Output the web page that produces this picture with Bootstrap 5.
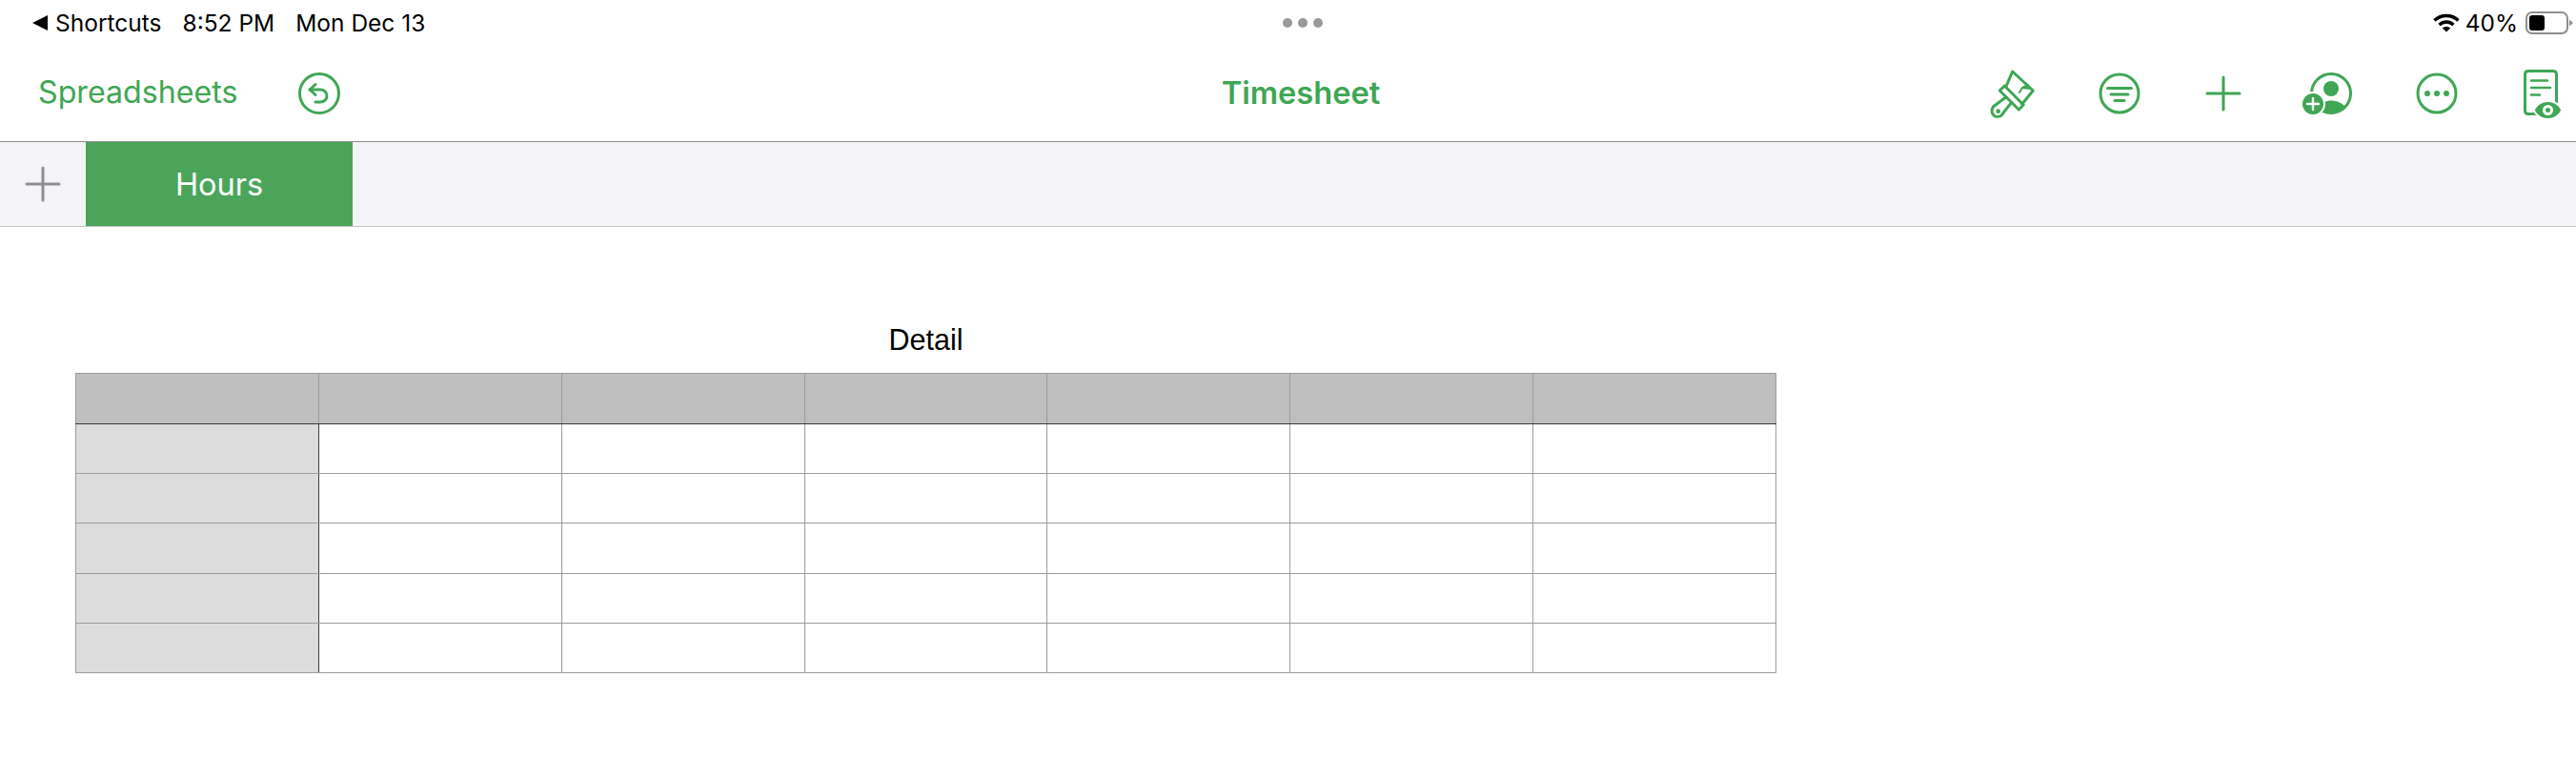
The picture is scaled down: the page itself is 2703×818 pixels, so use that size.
<!DOCTYPE html>
<html lang="en">
<head>
<meta charset="utf-8">
<title>Timesheet</title>
<link href="https://cdn.jsdelivr.net/npm/bootstrap@5.3.0/dist/css/bootstrap.min.css" rel="stylesheet">
<style>
html,body{height:100%;background:#fff;overflow:hidden}
body{font-family:Inter,"Liberation Sans",sans-serif;color:#000}
.stat-bar{height:48px;padding:0 3px 0 34px;display:grid;grid-template-columns:1fr auto 1fr;align-items:center;font-size:24.500px;line-height:1}
.stat-left{gap:22px}
.stat-dots{gap:6px}
.stat-dots i{display:block;width:10px;height:10px;border-radius:50%;background:#999}
.stat-pct{margin-left:6px}
.tool-bar{height:101px;padding:0 13px 1px 40px;display:grid;grid-template-columns:1fr auto 1fr;align-items:center;border-bottom:1px solid #8f8f8f;color:#3fa654}
.tool-link{font-size:32.200px;line-height:1}
.tool-title{font-size:32.600px;font-weight:600;line-height:1}
.undo-ic{margin-left:63px}
.ic{display:block;flex:none}
.ic-b{margin-left:52px}.ic-c{margin-left:49px}.ic-d{margin-left:51px}.ic-e{margin-left:53px}.ic-f{margin-left:57px}
.tab-bar{height:89px;background:#f5f5f7;border-bottom:1px solid #c4c4c4}
.tab-add{width:90px}
.tab-on{width:280px;background:#4aa55b;color:#fff;font-size:32.500px;height:88px;padding-top:2px}
.sheet-wrap{margin-left:79px;padding-top:100px;width:1785px}
.sheet-title{font-family:"Liberation Sans",Arial,sans-serif;font-size:30.500px;line-height:36px;margin-bottom:17px;text-align:center}
.sheet{width:1785px;table-layout:fixed;border-collapse:collapse}
.sheet td,.sheet th{border:1px solid #9c9c9c;padding:0;height:52px}
.sheet thead th{background:#bfbfbf;height:53px;border-bottom:1px solid #3a3a3a}
.sheet tbody th{background:#dcdcdc;border-right:1px solid #3a3a3a}
.sheet td{background:#fff}
.sheet .row-t{height:53px}
</style>
</head>
<body>
<div class="stat-bar">
  <div class="d-flex align-items-center stat-left">
    <span class="d-flex align-items-center gap-2"><svg width="16" height="16" viewBox="0 0 16 16" class="ic"><path d="M0 8 16 0V16Z" fill="#000"/></svg>Shortcuts</span>
    <span>8:52 PM</span>
    <span>Mon Dec 13</span>
  </div>
  <div class="d-flex stat-dots"><i></i><i></i><i></i></div>
  <div class="d-flex align-items-center justify-content-end">
    <svg width="28" height="20" viewBox="0 0 28 20" class="ic" fill="none" stroke="#000" stroke-width="3.4"><path d="M1.5 7.5C8.500 .8 19.500 .8 26.500 7.500"/><path d="M6.500 12C11 8 17 8 21.500 12"/><path d="M14 19.500 9.800 15.500C12 13.500 16 13.500 18.200 15.500Z" fill="#000" stroke="none"/></svg>
    <span class="stat-pct">40%</span>
    <svg width="50" height="24" viewBox="0 0 50 24" class="ic ms-2" fill="none"><rect x="1" y="1" width="43" height="22" rx="6" stroke="#8e8e8e" stroke-width="2"/><rect x="4" y="4" width="16" height="16" rx="3" fill="#000"/><path d="M46 8.500 50 12 46 15.500Z" fill="#8e8e8e"/></svg>
  </div>
</div>

<div class="tool-bar">
  <div class="d-flex align-items-center">
    <span class="tool-link">Spreadsheets</span>
    <svg class="ic undo-ic" width="44" height="44" viewBox="0 0 44 44" fill="none" stroke="#3fa654" stroke-width="3" stroke-linecap="round" stroke-linejoin="round"><circle cx="22" cy="22" r="20.500"/><path d="M18 12.500 12 18l6 5.500"/><path d="M12 18h11c4 0 7 2.800 7 6.500S27 31 23 31h-5"/></svg>
  </div>
  <div class="tool-title">Timesheet</div>
  <div class="d-flex align-items-center justify-content-end">
    <svg class="ic" width="60" height="60" viewBox="0 0 60 60" fill="none" stroke="#3fa654" stroke-width="3" stroke-linecap="round" stroke-linejoin="round"><path d="M23 22.700 29.700 7 51.300 27 39.700 41.300"/><path d="M21.300 22 16.300 27 36.300 47 41.300 42Z"/><path d="M23 33.700 9.700 43.700C7 47 8 51 10 53C12.500 55 16 54.500 18 53L28.700 39.300"/><circle cx="14.700" cy="48.700" r="1.600" fill="#3fa654" stroke-width="1.500"/><path d="M37 29 40 24 46 21 48 25 40 24Z" fill="#3fa654" stroke-width="2"/></svg>
    <svg class="ic ic-b" width="60" height="60" viewBox="0 0 60 60" fill="none" stroke="#3fa654" stroke-width="3" stroke-linecap="round"><circle cx="30" cy="30" r="20"/><path d="M17.500 24.500h25M21 31h18M25 37.500h10"/></svg>
    <svg class="ic ic-c" width="60" height="60" viewBox="0 0 60 60" fill="none" stroke="#3fa654" stroke-width="3" stroke-linecap="round"><path d="M13 30h34M30 13v34"/></svg>
    <svg class="ic ic-d" width="60" height="60" viewBox="0 0 60 60" fill="none"><circle cx="32" cy="30" r="20.500" stroke="#3fa654" stroke-width="3"/><circle cx="32" cy="25" r="8" fill="#3fa654"/><path d="M18 45C22 39.500 27 37.500 32 37.500S43 39.500 47 44C43 49 37 51 32 51 26 51 21 49 18 45Z" fill="#3fa654"/><circle cx="13" cy="41" r="13" fill="#fff"/><circle cx="13" cy="41" r="11" fill="#3fa654"/><path d="M13 35v12M7 41h12" stroke="#fff" stroke-width="2.400" stroke-linecap="round"/></svg>
    <svg class="ic ic-e" width="60" height="60" viewBox="0 0 60 60" fill="none"><circle cx="30" cy="30" r="20" stroke="#3fa654" stroke-width="3"/><circle cx="20" cy="30" r="3" fill="#3fa654"/><circle cx="30" cy="30" r="3" fill="#3fa654"/><circle cx="40" cy="30" r="3" fill="#3fa654"/></svg>
    <svg class="ic ic-f" width="46" height="60" viewBox="0 0 46 60" fill="none"><path d="M20 51.500H9C6.800 51.500 5.500 50 5.500 48V10C5.500 8 6.800 6.500 9 6.500H35C37.200 6.500 38.500 8 38.500 10V40" stroke="#3fa654" stroke-width="3"/><path d="M12 16.500H29M12 24H32M12 31.500H21" stroke="#3fa654" stroke-width="2.600" stroke-linecap="round"/><path d="M14.500 47.500C18 41 23.500 38 29.500 38S41 41 44.500 47.500C41 54 35.500 57 29.500 57S18 54 14.500 47.500Z" fill="#3fa654" stroke="#fff" stroke-width="2"/><circle cx="29.500" cy="47.500" r="5.500" fill="#fff"/><circle cx="29.500" cy="47.500" r="2.500" fill="#3fa654"/></svg>
  </div>
</div>

<div class="tab-bar d-flex">
  <div class="tab-add d-flex align-items-center justify-content-center">
    <svg class="ic" width="38" height="38" viewBox="0 0 38 38" fill="none" stroke="#8e8e93" stroke-width="3" stroke-linecap="round"><path d="M2 19h34M19 2v34"/></svg>
  </div>
  <div class="tab-on d-flex align-items-center justify-content-center">Hours</div>
</div>

<div class="sheet-wrap">
  <div class="sheet-title">Detail</div>
  <table class="sheet">
    <thead><tr><th></th><th></th><th></th><th></th><th></th><th></th><th></th></tr></thead>
    <tbody>
      <tr><th></th><td></td><td></td><td></td><td></td><td></td><td></td></tr>
      <tr><th></th><td></td><td></td><td></td><td></td><td></td><td></td></tr>
      <tr class="row-t"><th></th><td></td><td></td><td></td><td></td><td></td><td></td></tr>
      <tr><th></th><td></td><td></td><td></td><td></td><td></td><td></td></tr>
      <tr><th></th><td></td><td></td><td></td><td></td><td></td><td></td></tr>
    </tbody>
  </table>
</div>
<script src="https://cdn.jsdelivr.net/npm/bootstrap@5.3.0/dist/js/bootstrap.bundle.min.js"></script>
</body>
</html>
